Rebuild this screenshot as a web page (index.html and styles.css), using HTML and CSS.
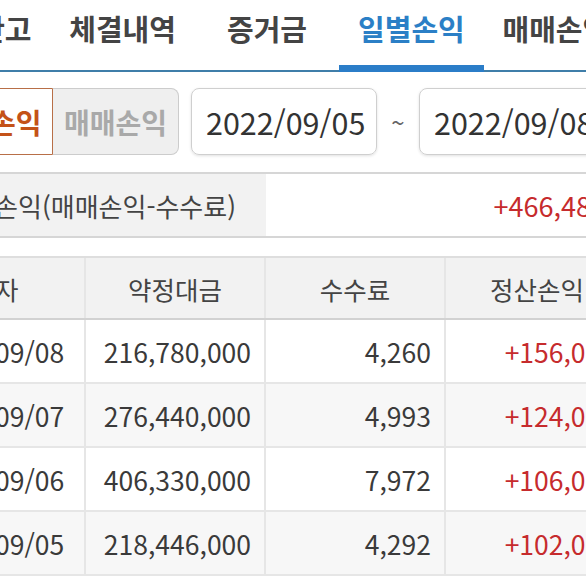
FILE: index.html
```html
<!DOCTYPE html>
<html lang="ko">
<head>
<meta charset="utf-8">
<link rel="stylesheet" href="styles.css">
</head>
<body>
<div class="page">
  <nav class="tabs">
    <div class="tab">주식잔고</div>
    <div class="tab">체결내역</div>
    <div class="tab">증거금</div>
    <div class="tab active">일별손익</div>
    <div class="tab">매매손익</div>
  </nav>

  <div class="controls">
    <div class="toggle">
      <div class="tbtn on">일별손익</div>
      <div class="tbtn off">매매손익</div>
    </div>
    <div class="date">2022/09/05</div>
    <div class="tilde">~</div>
    <div class="date">2022/09/08</div>
  </div>

  <div class="summary">
    <div class="sum-label">일별손익(매매손익-수수료)</div>
    <div class="sum-value">+466,480</div>
  </div>

  <div class="table">
    <div class="row head">
      <div class="cell c">일자</div>
      <div class="cell c">약정대금</div>
      <div class="cell c">수수료</div>
      <div class="cell c">정산손익</div>
    </div>
    <div class="row">
      <div class="cell c">2022/09/08</div>
      <div class="cell r">216,780,000</div>
      <div class="cell r">4,260</div>
      <div class="cell r red">+156,000</div>
    </div>
    <div class="row alt">
      <div class="cell c">2022/09/07</div>
      <div class="cell r">276,440,000</div>
      <div class="cell r">4,993</div>
      <div class="cell r red">+124,000</div>
    </div>
    <div class="row">
      <div class="cell c">2022/09/06</div>
      <div class="cell r">406,330,000</div>
      <div class="cell r">7,972</div>
      <div class="cell r red">+106,000</div>
    </div>
    <div class="row alt">
      <div class="cell c">2022/09/05</div>
      <div class="cell r">218,446,000</div>
      <div class="cell r">4,292</div>
      <div class="cell r red">+102,000</div>
    </div>
  </div>
</div>
</body>
</html>
```

FILE: styles.css
```css
* { box-sizing: border-box; }
html, body {
  margin: 0;
  padding: 0;
  background: #ffffff;
  overflow: hidden;
}
body {
  font-family: "Noto Sans CJK KR", "Noto Sans", sans-serif;
  color: #3a3a3a;
}
.page {
  width: 722px;
  margin-left: -94px;
}

/* tabs */
.tabs {
  display: flex;
  height: 72px;
  border-bottom: 2px solid #3f7ea9;
}
.tab {
  flex: 1;
  position: relative;
  text-align: center;
  padding-top: 8px;
  font-size: 29px;
  line-height: 40px;
  font-weight: 700;
  color: #444444;
}
.tab.active { color: #2b7fc6; }
.tab.active::after {
  content: "";
  position: absolute;
  left: 0;
  right: 0;
  bottom: -2px;
  height: 7px;
  background: #2b7dc8;
}

/* controls */
.controls {
  display: flex;
  align-items: center;
  margin-top: 16px;
  padding-left: 21px;
  height: 67px;
}
.toggle {
  display: flex;
  height: 67px;
}
.tbtn {
  width: 126px;
  display: flex;
  align-items: center;
  justify-content: center;
  font-size: 28px;
  font-weight: 700;
}
.tbtn.on {
  border: 1px solid #b86f47;
  border-radius: 8px 0 0 8px;
  color: #c45218;
  background: #ffffff;
}
.tbtn.off {
  border: 1px solid #cccccc;
  border-left: none;
  border-radius: 0 8px 8px 0;
  background: #efefef;
  color: #a9a9a9;
}
.date {
  margin-left: 12px;
  width: 186px;
  height: 67px;
  border: 1px solid #cfcfcf;
  border-radius: 8px;
  box-shadow: 0 1px 3px rgba(0, 0, 0, 0.12);
  display: flex;
  align-items: center;
  padding-left: 14px;
  font-size: 30.5px;
  color: #333333;
}
.tilde {
  width: 42px;
  text-align: center;
  font-size: 24px;
  color: #666666;
}
.tilde + .date { margin-left: 0; }

/* summary */
.summary {
  display: grid;
  grid-template-columns: 360px 362px;
  margin-top: 17px;
  border-top: 2px solid #d6d6d6;
  border-bottom: 2px solid #d6d6d6;
  height: 66px;
}
.sum-label {
  background: #f2f2f2;
  display: flex;
  align-items: center;
  justify-content: flex-end;
  padding-right: 30px;
  font-size: 26px;
  color: #444444;
  white-space: nowrap;
}
.sum-value {
  display: flex;
  align-items: center;
  justify-content: flex-end;
  padding-right: 22px;
  font-size: 27px;
  color: #c62b2d;
}

/* table */
.table {
  margin-top: 18px;
  border-top: 2px solid #dedede;
}
.row {
  display: grid;
  grid-template-columns: 180px 180px 180px 182px;
  height: 64px;
  border-bottom: 2px solid #e6e6e6;
}
.row.head {
  height: 62px;
  background: #f2f2f2;
  border-bottom: 2px solid #d2d2d2;
}
.row.alt { background: #f7f7f7; }
.cell {
  display: flex;
  align-items: center;
  border-right: 2px solid #e6e6e6;
  font-size: 26.5px;
  color: #3a3a3a;
}
.row.head .cell { font-size: 25.5px; color: #444444; }
.cell:last-child { border-right: none; }
.cell.c { justify-content: center; }
.cell.r { justify-content: flex-end; padding-right: 13px; }
.cell.red { color: #c62b2d; }
```
